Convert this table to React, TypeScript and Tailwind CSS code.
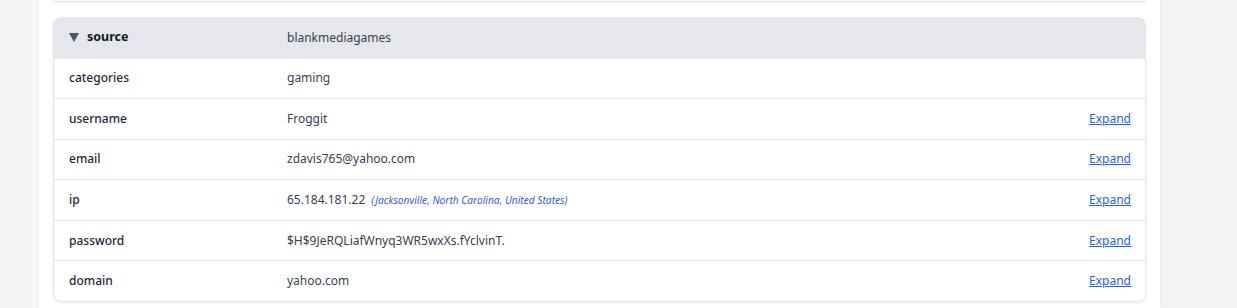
const rows: { label: string; value: string; extra?: string; expand?: boolean }[] = [
  { label: 'categories', value: 'gaming' },
  { label: 'username', value: 'Froggit', expand: true },
  { label: 'email', value: 'zdavis765@yahoo.com', expand: true },
  { label: 'ip', value: '65.184.181.22', extra: '(Jacksonville, North Carolina, United States)', expand: true },
  { label: 'password', value: '$H$9JeRQLiafWnyq3WR5wxXs.fYclvinT.', expand: true },
  { label: 'domain', value: 'yahoo.com', expand: true },
]

export default function App() {
  return (
    <div className="h-[308px] w-[1237px] overflow-hidden bg-[#f3f4f6] font-['Noto_Sans',sans-serif] text-[12px]">
      <div className="ml-[39px] h-full w-[1121px] bg-white px-[14px] shadow-[0_0_2px_rgba(0,0,0,0.08)]">
        {/* previous card, only its bottom edge shows */}
        <div className="h-[2px] rounded-b-lg border-x border-b border-gray-200 bg-white shadow-sm" />

        <div className="mt-[15px] overflow-hidden rounded-lg border border-gray-200 bg-white shadow-[0_1px_3px_rgba(0,0,0,0.08)]">
          <div className="grid h-[39.5px] grid-cols-[218px_1fr] items-center bg-[#e5e7eb] pl-[15px] pr-4">
            <div className="flex items-center gap-[8px] font-bold text-gray-900">
              <svg width="10" height="9" viewBox="0 0 10 9" className="shrink-0">
                <path d="M0 0h10L5 9z" fill="#4b5563" />
              </svg>
              <span className="text-[12.5px]">source</span>
            </div>
            <div className="text-gray-700">blankmediagames</div>
          </div>

          {rows.map(r => (
            <div
              key={r.label}
              className="grid h-[40.6px] grid-cols-[218px_1fr_auto] items-center border-t border-gray-200 pl-[15px] pr-[14px]"
            >
              <div className="font-medium text-gray-800">{r.label}</div>
              <div className="flex items-baseline gap-[6px] text-gray-700">
                <span>{r.value}</span>
                {r.extra && <span className="text-[10.2px] italic text-[#3b5bdb]">{r.extra}</span>}
              </div>
              {r.expand ? (
                <a className="cursor-pointer text-[#2563eb] underline">Expand</a>
              ) : (
                <span />
              )}
            </div>
          ))}
        </div>
      </div>
    </div>
  )
}
